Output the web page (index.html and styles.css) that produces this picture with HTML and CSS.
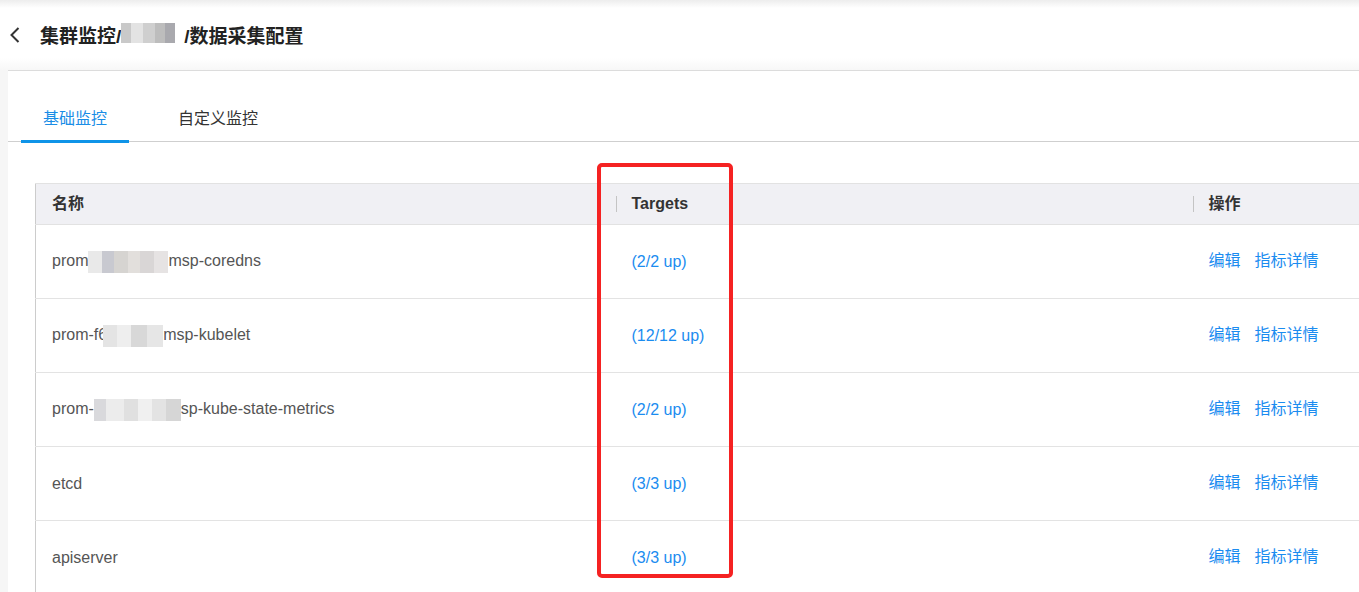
FILE: index.html
```html
<!DOCTYPE html>
<html lang="zh-CN">
<head>
    <meta charset="UTF-8">
    <meta name="viewport" content="width=device-width, initial-scale=1.0">
    <title>数据采集配置</title>
    <link rel="stylesheet" href="styles.css">
</head>
<body>
    <div class="page-head">
        <span class="back">
            <svg width="12" height="18" viewBox="0 0 12 18"><path d="M9.5 2 L2.5 9 L9.5 16" fill="none" stroke="#333" stroke-width="2"/></svg>
        </span>
        <h1>集群监控/<span class="mask mask-title"></span>/数据采集配置</h1>
    </div>

    <div class="card">
        <div class="tabs">
            <div class="tab active">基础监控</div>
            <div class="tab">自定义监控</div>
        </div>

        <table class="list">
            <colgroup>
                <col class="col-name">
                <col class="col-targets">
                <col class="col-ops">
            </colgroup>
            <thead>
                <tr>
                    <th>名称</th>
                    <th class="sep">Targets</th>
                    <th class="sep">操作</th>
                </tr>
            </thead>
            <tbody>
                <tr>
                    <td>prom<span class="mask mask-a"></span>msp-coredns</td>
                    <td><a href="#">(2/2 up)</a></td>
                    <td class="ops"><a href="#" class="op">编辑</a><a href="#">指标详情</a></td>
                </tr>
                <tr>
                    <td>prom-f6<span class="mask mask-b"></span>msp-kubelet</td>
                    <td><a href="#">(12/12 up)</a></td>
                    <td class="ops"><a href="#" class="op">编辑</a><a href="#">指标详情</a></td>
                </tr>
                <tr>
                    <td>prom-<span class="mask mask-c"></span>sp-kube-state-metrics</td>
                    <td><a href="#">(2/2 up)</a></td>
                    <td class="ops"><a href="#" class="op">编辑</a><a href="#">指标详情</a></td>
                </tr>
                <tr>
                    <td>etcd</td>
                    <td><a href="#">(3/3 up)</a></td>
                    <td class="ops"><a href="#" class="op">编辑</a><a href="#">指标详情</a></td>
                </tr>
                <tr>
                    <td>apiserver</td>
                    <td><a href="#">(3/3 up)</a></td>
                    <td class="ops"><a href="#" class="op">编辑</a><a href="#">指标详情</a></td>
                </tr>
            </tbody>
        </table>

        <div class="highlight"></div>
    </div>
</body>
</html>
```

FILE: styles.css
```css
html, body {
    margin: 0;
    padding: 0;
}
body {
    font-family: "Liberation Sans", "Noto Sans CJK SC", sans-serif;
    background-color: #f6f6f6;
    overflow: hidden;
    width: 1359px;
    height: 592px;
}
.page-head {
    height: 70px;
    display: flex;
    align-items: center;
    padding-left: 9px;
    background: linear-gradient(to bottom, #ededed 0, #fff 8px, #fff 58px, #f7f7f7 70px);
}
.back {
    display: flex;
    width: 12px;
    height: 18px;
    margin-right: 19px;
}
h1 {
    margin: 0 0 2px;
    font-size: 19px;
    font-weight: bold;
    color: #222;
    display: flex;
    align-items: center;
}
.mask {
    display: inline-block;
    height: 22px;
    vertical-align: middle;
    filter: blur(0.6px);
}
.mask-title {
    width: 58px;
    height: 20px;
    margin: 0 5px 2px 0;
    background: linear-gradient(to right, #c9c9c9 0, #c9c9c9 10px, #e3e3e3 10px, #e3e3e3 22px, #cfcfcf 22px, #cfcfcf 34px, #bdbdbd 34px, #bdbdbd 44px, #a9a9ae 44px, #a9a9ae 54px, #fff 54px);
}
.mask-a {
    width: 80px;
    background: linear-gradient(to right, #e9e9e9 0, #e9e9e9 14px, #c8c9d0 14px, #c8c9d0 26px, #d6d4d1 26px, #d6d4d1 40px, #e2dfdc 40px, #e2dfdc 52px, #d9d6d6 52px, #d9d6d6 66px, #e6e3e3 66px);
}
.mask-b {
    width: 60px;
    margin-left: -4px;
    background: linear-gradient(to right, #e4e4e4 0, #e4e4e4 14px, #eeeeee 14px, #eeeeee 28px, #d8d8d8 28px, #d8d8d8 44px, #e6e6e6 44px);
}
.mask-c {
    width: 87px;
    background: linear-gradient(to right, #d9d9dc 0, #d9d9dc 12px, #ececec 12px, #ececec 30px, #e0e0e0 30px, #e0e0e0 44px, #f0f0f0 44px, #f0f0f0 58px, #e3e3e3 58px, #e3e3e3 72px, #d6d6d6 72px);
}
.card {
    position: relative;
    margin-left: 8px;
    background: #fff;
    border-top: 1px solid #dcdcdc;
    height: 521px;
    overflow: hidden;
}
.tabs {
    display: flex;
    gap: 27px;
    height: 70px;
    padding-left: 13px;
    border-bottom: 1px solid #cfcfcf;
}
.tab {
    padding: 37px 22px 10px;
    line-height: 22px;
    font-size: 16px;
    color: #333;
    border-bottom: 3px solid transparent;
    margin-bottom: -2px;
}
.tab.active {
    color: #1a8de6;
    border-bottom-color: #0f94e8;
}
.list {
    margin: 41px 0 0 27px;
    width: 1460px;
    border-collapse: collapse;
    table-layout: fixed;
    border-left: 1px solid #cccccc;
    font-size: 16px;
}
.col-name {
    width: 580px;
}
.col-targets {
    width: 577px;
}
.list thead tr {
    height: 41px;
}
.list tbody tr {
    height: 74px;
}
.list th {
    position: relative;
    padding: 0 16px;
    line-height: 20px;
    text-align: left;
    font-weight: bold;
    color: #333;
    background: #f0f0f4;
    border-top: 1px solid #e2e2e2;
    border-bottom: 1px solid #e2e2e2;
}
.list th.sep::before {
    content: "";
    position: absolute;
    left: 0;
    top: 12px;
    width: 1px;
    height: 16px;
    background: #c4c4c4;
}
.list td {
    padding: 0 16px;
    line-height: 20px;
    color: #555;
    border-bottom: 1px solid #e3e3e3;
    white-space: nowrap;
}
.list td.ops {
    padding-bottom: 2px;
}
.list a {
    color: #1b8cf0;
    text-decoration: none;
}
.list a.op {
    margin-right: 14px;
}
.highlight {
    position: absolute;
    left: 589px;
    top: 92px;
    width: 136px;
    height: 415px;
    box-sizing: border-box;
    border: 4px solid #f52222;
    border-radius: 5px;
}
```
